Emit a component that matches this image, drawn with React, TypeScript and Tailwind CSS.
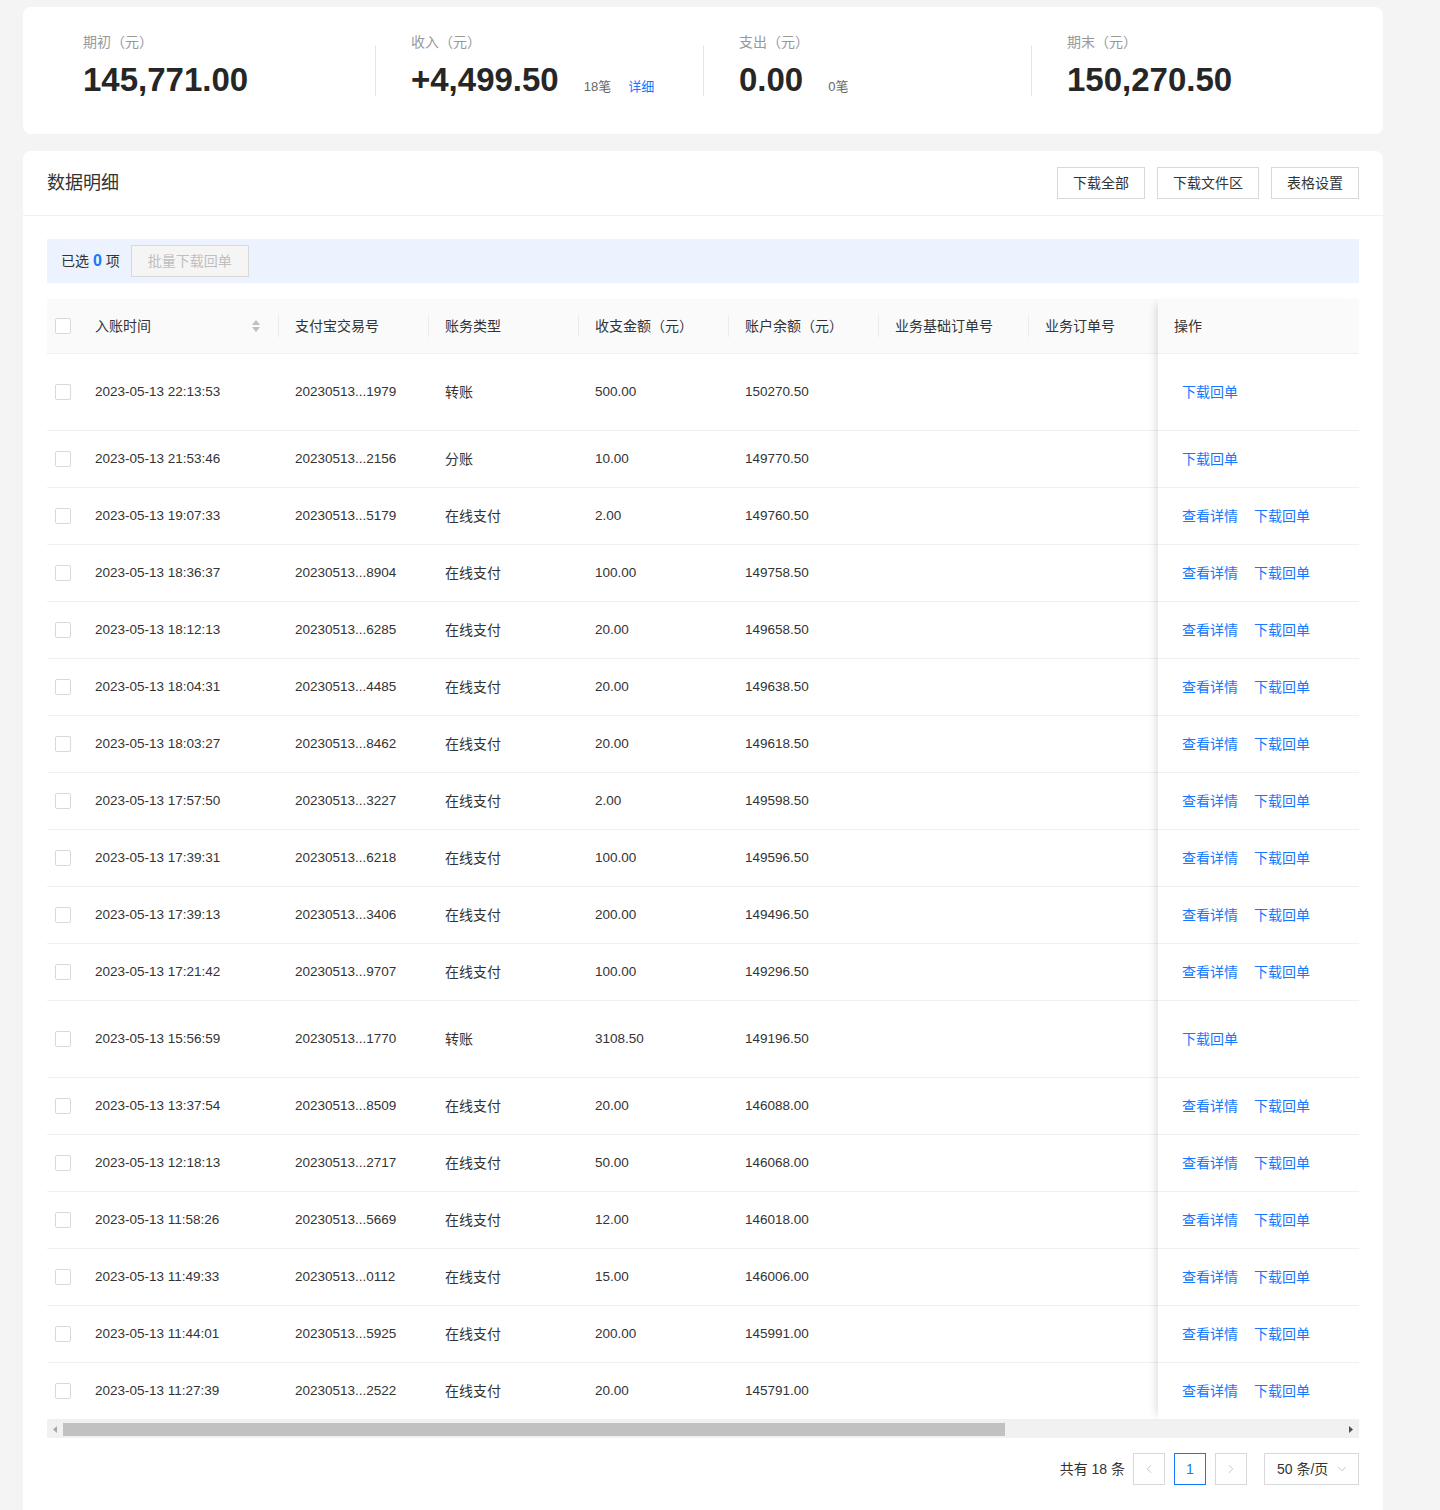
import React from 'react';
import { ChevronLeft, ChevronRight, ChevronDown } from 'lucide-react';

type Row = {
  time: string;
  tradeNo: string;
  type: string;
  amount: string;
  balance: string;
  tall?: boolean;
  detail?: boolean;
};

const rows: Row[] = [
  { time: '2023-05-13 22:13:53', tradeNo: '20230513...1979', type: '转账', amount: '500.00', balance: '150270.50', tall: true },
  { time: '2023-05-13 21:53:46', tradeNo: '20230513...2156', type: '分账', amount: '10.00', balance: '149770.50' },
  { time: '2023-05-13 19:07:33', tradeNo: '20230513...5179', type: '在线支付', amount: '2.00', balance: '149760.50', detail: true },
  { time: '2023-05-13 18:36:37', tradeNo: '20230513...8904', type: '在线支付', amount: '100.00', balance: '149758.50', detail: true },
  { time: '2023-05-13 18:12:13', tradeNo: '20230513...6285', type: '在线支付', amount: '20.00', balance: '149658.50', detail: true },
  { time: '2023-05-13 18:04:31', tradeNo: '20230513...4485', type: '在线支付', amount: '20.00', balance: '149638.50', detail: true },
  { time: '2023-05-13 18:03:27', tradeNo: '20230513...8462', type: '在线支付', amount: '20.00', balance: '149618.50', detail: true },
  { time: '2023-05-13 17:57:50', tradeNo: '20230513...3227', type: '在线支付', amount: '2.00', balance: '149598.50', detail: true },
  { time: '2023-05-13 17:39:31', tradeNo: '20230513...6218', type: '在线支付', amount: '100.00', balance: '149596.50', detail: true },
  { time: '2023-05-13 17:39:13', tradeNo: '20230513...3406', type: '在线支付', amount: '200.00', balance: '149496.50', detail: true },
  { time: '2023-05-13 17:21:42', tradeNo: '20230513...9707', type: '在线支付', amount: '100.00', balance: '149296.50', detail: true },
  { time: '2023-05-13 15:56:59', tradeNo: '20230513...1770', type: '转账', amount: '3108.50', balance: '149196.50', tall: true },
  { time: '2023-05-13 13:37:54', tradeNo: '20230513...8509', type: '在线支付', amount: '20.00', balance: '146088.00', detail: true },
  { time: '2023-05-13 12:18:13', tradeNo: '20230513...2717', type: '在线支付', amount: '50.00', balance: '146068.00', detail: true },
  { time: '2023-05-13 11:58:26', tradeNo: '20230513...5669', type: '在线支付', amount: '12.00', balance: '146018.00', detail: true },
  { time: '2023-05-13 11:49:33', tradeNo: '20230513...0112', type: '在线支付', amount: '15.00', balance: '146006.00', detail: true },
  { time: '2023-05-13 11:44:01', tradeNo: '20230513...5925', type: '在线支付', amount: '200.00', balance: '145991.00', detail: true },
  { time: '2023-05-13 11:27:39', tradeNo: '20230513...2522', type: '在线支付', amount: '20.00', balance: '145791.00', detail: true },
];

const stats = [
  { label: '期初（元）', value: '145,771.00' },
  { label: '收入（元）', value: '+4,499.50', count: '18笔', link: '详细' },
  { label: '支出（元）', value: '0.00', count: '0笔' },
  { label: '期末（元）', value: '150,270.50' },
];

const Checkbox = () => (
  <span className="block w-4 h-4 border border-[#d9d9d9] rounded-[2px] bg-white" />
);

const SortIcon = () => (
  <svg width="8" height="12" viewBox="0 0 8 12" className="shrink-0">
    <path d="M4 0 L8 5 L0 5 Z" fill="#bfbfbf" />
    <path d="M4 12 L8 7 L0 7 Z" fill="#bfbfbf" />
  </svg>
);

const HeadCell: React.FC<{ w: string; children: React.ReactNode; divider?: boolean }> = ({ w, children, divider = true }) => (
  <div className={`${w} shrink-0 h-full flex items-center`}>
    <div className="flex-1 flex items-center pl-4 pr-[18px] min-w-0">{children}</div>
    {divider && <span className="w-px h-[22px] bg-[#ebebeb]" />}
  </div>
);

const App: React.FC = () => {
  return (
    <div
      className="min-h-[1510px] bg-[#f4f4f4] pt-[7px] pl-[23px] text-[#333]"
      style={{ fontFamily: '"Liberation Sans", "Noto Sans CJK SC", sans-serif' }}
    >
      <div className="w-[1360px]">
        {/* summary */}
        <div className="h-[127px] bg-white rounded-lg px-6 pt-[25px] flex">
          {stats.map((s, i) => (
            <div key={s.label} className="w-[328px] flex items-start">
              {i > 0 && <span className="w-px h-[50px] mt-[14px] bg-[#e3e3e3]" />}
              <div className={i > 0 ? 'pl-[35px]' : 'pl-9'}>
                <div className="h-5 leading-5 text-sm text-[#999]">{s.label}</div>
                <div className="mt-2 flex items-baseline">
                  <span className="text-[33px] leading-10 font-bold text-[#262626]">{s.value}</span>
                  {s.count && <span className="ml-[25px] text-[13px] text-[#666]">{s.count}</span>}
                  {s.link && <span className="ml-[17px] text-[13px] text-[#1677ff]">{s.link}</span>}
                </div>
              </div>
            </div>
          ))}
        </div>

        {/* detail card */}
        <div className="mt-[17px] bg-white rounded-t-lg pb-[25px]">
          <div className="h-[65px] px-6 flex items-center justify-between border-b border-[#f0f0f0]">
            <h2 className="text-lg text-[#333]">数据明细</h2>
            <div className="flex gap-3">
              {['下载全部', '下载文件区', '表格设置'].map((b) => (
                <button key={b} className="h-8 px-[15px] border border-[#d9d9d9] bg-white text-sm text-[#333]">
                  {b}
                </button>
              ))}
            </div>
          </div>

          <div className="px-6 pt-[23px]">
            <div className="h-[44px] bg-[#ecf3fe] px-[14px] flex items-center">
              <span className="text-sm">
                已选 <span className="text-base font-bold text-[#1677ff]">0</span> 项
              </span>
              <button className="ml-[11px] h-8 px-4 border border-[#d9d9d9] bg-[#f5f5f5] text-sm text-[#bfbfbf]">
                批量下载回单
              </button>
            </div>

            {/* table */}
            <div className="mt-4 flex">
              <div className="w-[1111px] overflow-hidden">
                <div className="w-[1582px]">
                  <div className="h-[55px] bg-[#fafafa] border-b border-[#f0f0f0] flex items-center text-sm">
                    <div className="w-[32px] shrink-0 pl-2">
                      <Checkbox />
                    </div>
                    <HeadCell w="w-[200px]">
                      <span className="flex-1">入账时间</span>
                      <SortIcon />
                    </HeadCell>
                    <HeadCell w="w-[150px]">支付宝交易号</HeadCell>
                    <HeadCell w="w-[150px]">账务类型</HeadCell>
                    <HeadCell w="w-[150px]">收支金额（元）</HeadCell>
                    <HeadCell w="w-[150px]">账户余额（元）</HeadCell>
                    <HeadCell w="w-[150px]">业务基础订单号</HeadCell>
                    <HeadCell w="w-[150px]">业务订单号</HeadCell>
                  </div>
                  {rows.map((r) => (
                    <div
                      key={r.time}
                      className={`${r.tall ? 'h-[77px]' : 'h-[57px]'} border-b border-[#f0f0f0] flex items-center text-[13.5px]`}
                    >
                      <div className="w-[32px] shrink-0 pl-2">
                        <Checkbox />
                      </div>
                      <div className="w-[200px] shrink-0 pl-4">{r.time}</div>
                      <div className="w-[150px] shrink-0 pl-4">{r.tradeNo}</div>
                      <div className="w-[150px] shrink-0 pl-4 text-sm">{r.type}</div>
                      <div className="w-[150px] shrink-0 pl-4">{r.amount}</div>
                      <div className="w-[150px] shrink-0 pl-4">{r.balance}</div>
                      <div className="w-[150px] shrink-0 pl-4" />
                      <div className="w-[150px] shrink-0 pl-4" />
                    </div>
                  ))}
                </div>
              </div>

              <div className="w-[201px] shrink-0 bg-white relative z-10 shadow-[-7px_0_8px_-5px_rgba(0,0,0,0.13)]">
                <div className="h-[55px] bg-[#fafafa] border-b border-[#f0f0f0] flex items-center pl-4 text-sm">
                  操作
                </div>
                {rows.map((r) => (
                  <div
                    key={r.time}
                    className={`${r.tall ? 'h-[77px]' : 'h-[57px]'} border-b border-[#f0f0f0] flex items-center gap-4 pl-6 text-sm text-[#1677ff]`}
                  >
                    {r.detail && <span>查看详情</span>}
                    <span>下载回单</span>
                  </div>
                ))}
              </div>
            </div>

            {/* horizontal scrollbar */}
            <div className="h-[18px] bg-[#f1f1f1] flex items-center">
              <div className="w-4 flex justify-center">
                <svg width="4" height="7" viewBox="0 0 4 7">
                  <path d="M4 0 L0 3.5 L4 7 Z" fill="#a8a8a8" />
                </svg>
              </div>
              <div className="w-[942px] h-[13px] bg-[#c1c1c1]" />
              <div className="flex-1" />
              <div className="w-4 flex justify-center">
                <svg width="4" height="7" viewBox="0 0 4 7">
                  <path d="M0 0 L4 3.5 L0 7 Z" fill="#505050" />
                </svg>
              </div>
            </div>

            {/* pagination */}
            <div className="mt-[15px] flex justify-end items-center text-sm">
              <span>共有 18 条</span>
              <div className="ml-2 w-8 h-8 border border-[#d9d9d9] flex items-center justify-center">
                <ChevronLeft size={14} strokeWidth={1.5} color="#bfbfbf" />
              </div>
              <div className="ml-[9px] w-8 h-8 border border-[#1677ff] flex items-center justify-center text-[#1677ff]">
                1
              </div>
              <div className="ml-[9px] w-8 h-8 border border-[#d9d9d9] flex items-center justify-center">
                <ChevronRight size={14} strokeWidth={1.5} color="#bfbfbf" />
              </div>
              <div className="ml-[17px] w-[95px] h-8 border border-[#d9d9d9] flex items-center justify-between pl-3 pr-[9px]">
                <span>50 条/页</span>
                <ChevronDown size={14} strokeWidth={1.5} color="#bfbfbf" />
              </div>
            </div>
          </div>
        </div>
      </div>
    </div>
  );
};

export default App;
